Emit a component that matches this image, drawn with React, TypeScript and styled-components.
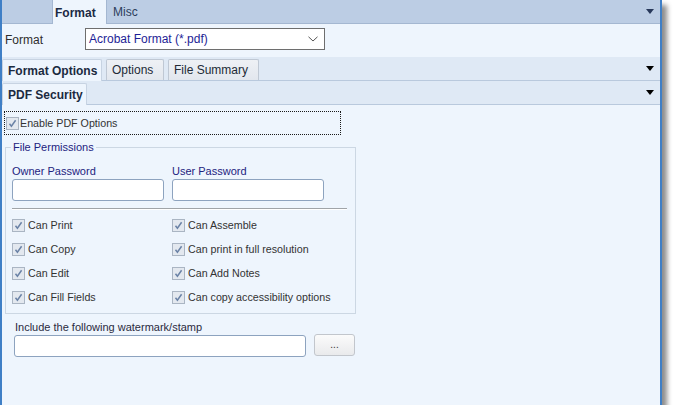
import React from "react";
import styled, { createGlobalStyle } from "styled-components";

const Global = createGlobalStyle`
  html, body { margin: 0; padding: 0; background: #ffffff; }
  body { font-family: "Liberation Sans", Arial, sans-serif; font-size: 11px; }
`;

const Window = styled.div`
  width: 658px;
  height: 405px;
  background: #eef5fd;
  border-left: 2px solid #3f7fc6;
  border-right: 2px solid #3f7fc6;
  box-shadow: 5px 5px 5px rgba(0, 0, 0, 0.45);
  display: flex;
  flex-direction: column;
  overflow: hidden;
`;

const TopStrip = styled.div`
  height: 23px;
  background: #bccde4;
  border-bottom: 1px solid #a4b7d1;
  display: flex;
  align-items: stretch;
  padding-left: 50px;
  padding-right: 6px;
`;

const TopTab = styled.div<{ $active?: boolean }>`
  display: flex;
  align-items: center;
  padding-left: ${(p) => (p.$active ? "2px" : "5px")};
  width: ${(p) => (p.$active ? "55px" : "auto")};
  box-sizing: border-box;
  margin-bottom: ${(p) => (p.$active ? "-1px" : "0")};
  background: ${(p) => (p.$active ? "#eef5fd" : "transparent")};
  border-left: 1px solid ${(p) => (p.$active ? "#a4b7d1" : "transparent")};
  border-right: 1px solid ${(p) => (p.$active ? "#a4b7d1" : "transparent")};
  font-size: 12px;
  font-weight: ${(p) => (p.$active ? "bold" : "normal")};
  color: ${(p) => (p.$active ? "#1b2a44" : "#2c3d5c")};
  padding-top: 1px;
`;

const Spacer = styled.div`
  flex: 1;
`;

const Arrow = styled.div<{ $color: string }>`
  align-self: center;
  width: 0;
  height: 0;
  border-left: 4px solid transparent;
  border-right: 4px solid transparent;
  border-top: 5px solid ${(p) => p.$color};
`;

const FormatRow = styled.div`
  height: 33px;
  display: flex;
  align-items: flex-start;
  padding-top: 4px;
  box-sizing: border-box;
`;

const FormatLabel = styled.div`
  width: 83px;
  padding-left: 3px;
  padding-top: 5px;
  box-sizing: border-box;
  font-size: 12px;
  color: #2e2e2e;
`;

const Combo = styled.div`
  width: 240px;
  height: 22px;
  box-sizing: border-box;
  border: 1px solid #6e6e6e;
  background: #ffffff;
  display: flex;
  align-items: center;
  padding: 0 6px 0 3px;
  font-size: 12px;
  color: #1e1e96;
`;

const SubStrip = styled.div`
  height: 23px;
  background: #dfe9f5;
  border-bottom: 1px solid #b9c9dd;
  display: flex;
  align-items: flex-end;
  padding-right: 6px;
`;

const SubTab = styled.div<{ $active?: boolean; $w: number }>`
  width: ${(p) => p.$w}px;
  height: ${(p) => (p.$active ? "22px" : "21px")};
  box-sizing: border-box;
  margin-right: 4px;
  margin-bottom: ${(p) => (p.$active ? "-1px" : "0")};
  display: flex;
  align-items: center;
  padding-left: 5px;
  border: 1px solid ${(p) => (p.$active ? "#c7d3e2" : "#bfc8d4")};
  border-bottom: none;
  border-radius: 2px 2px 0 0;
  background: ${(p) =>
    p.$active ? "#eef5fd" : "linear-gradient(#eef1f5, #e2e7ee)"};
  font-size: 12px;
  font-weight: ${(p) => (p.$active ? "bold" : "normal")};
  color: ${(p) => (p.$active ? "#1b2a40" : "#222a36")};
`;

const Body = styled.div`
  flex: 1;
  padding: 6px 0 0 2px;
  display: flex;
  flex-direction: column;
  align-items: flex-start;
`;

const FocusRow = styled.div`
  width: 337px;
  height: 24px;
  box-sizing: border-box;
  border: 1px dotted #1a1a1a;
  display: flex;
  align-items: center;
  padding-left: 1px;
  gap: 1px;
`;

const Box = styled.span`
  width: 13px;
  height: 13px;
  box-sizing: border-box;
  border: 1px solid #aab5c3;
  background: #e3e8ef;
  display: inline-flex;
  align-items: center;
  justify-content: center;
  flex-shrink: 0;
`;

const CheckText = styled.span`
  color: #333333;
  font-size: 10.7px;
  white-space: nowrap;
`;

const CheckItem = styled.div`
  display: flex;
  align-items: center;
  gap: 3px;
  height: 24px;
`;

const Group = styled.fieldset`
  margin: 6px 0 0 1px;
  width: 351px;
  box-sizing: border-box;
  border: 1px solid #ccd7e3;
  padding: 12px 6px 4px 6px;
  min-width: 0;
`;

const Legend = styled.legend`
  padding: 0 2px;
  margin-left: -1px;
  font-size: 11px;
  color: #1d2380;
`;

const Grid = styled.div`
  display: grid;
  grid-template-columns: 160px 160px;
`;

const FieldLabel = styled.div`
  font-size: 11px;
  color: #1d2380;
  height: 14px;
`;

const TextInput = styled.div<{ $w: number }>`
  width: ${(p) => p.$w}px;
  height: 22px;
  box-sizing: border-box;
  border: 1px solid #8da3bf;
  border-radius: 3px;
  background: #ffffff;
`;

const Separator = styled.div`
  width: 335px;
  height: 0;
  border-top: 1px solid #a0a4a8;
  border-bottom: 1px solid #ffffff;
  margin: 7px 0 3px 0;
`;

const Watermark = styled.div`
  margin: 7px 0 0 10px;
  display: flex;
  flex-direction: column;
`;

const WmLabel = styled.div`
  font-size: 11px;
  color: #2a2a40;
  height: 14px;
  padding-left: 1px;
`;

const WmRow = styled.div`
  display: flex;
  align-items: flex-start;
  gap: 8px;
`;

const Button = styled.div`
  width: 41px;
  height: 22px;
  margin-top: -1px;
  box-sizing: border-box;
  border: 1px solid #c2c6cc;
  border-radius: 3px;
  background: linear-gradient(#fbfbfb, #e9eaec);
  display: flex;
  align-items: center;
  justify-content: center;
  font-size: 10px;
  color: #333;
  padding-bottom: 2px;
`;

const Check = () => (
  <Box>
    <svg width="9" height="9" viewBox="0 0 9 9">
      <path d="M1.5 4.8 L3.4 7.2 L7.6 1.2" fill="none" stroke="#6a82a6" strokeWidth="1.5" />
    </svg>
  </Box>
);

const CheckBox = ({ label }: { label: string }) => (
  <CheckItem>
    <Check />
    <CheckText>{label}</CheckText>
  </CheckItem>
);

export default function App() {
  return (
    <>
      <Global />
      <Window>
        <TopStrip>
          <TopTab $active>Format</TopTab>
          <TopTab>Misc</TopTab>
          <Spacer />
          <Arrow $color="#27385a" />
        </TopStrip>
        <FormatRow>
          <FormatLabel>Format</FormatLabel>
          <Combo>
            <span>Acrobat Format (*.pdf)</span>
            <Spacer />
            <svg width="10" height="6" viewBox="0 0 10 6">
              <path d="M0.5 0.8 L5 5 L9.5 0.8" fill="none" stroke="#555" strokeWidth="1" />
            </svg>
          </Combo>
        </FormatRow>
        <SubStrip>
          <SubTab $active $w={100}>Format Options</SubTab>
          <SubTab $w={58}>Options</SubTab>
          <SubTab $w={91}>File Summary</SubTab>
          <Spacer />
          <Arrow $color="#000000" />
        </SubStrip>
        <SubStrip>
          <SubTab $active $w={85}>PDF Security</SubTab>
          <Spacer />
          <Arrow $color="#000000" />
        </SubStrip>
        <Body>
          <FocusRow>
            <Check />
            <CheckText>Enable PDF Options</CheckText>
          </FocusRow>
          <Group>
            <Legend>File Permissions</Legend>
            <Grid>
              <div>
                <FieldLabel>Owner Password</FieldLabel>
                <TextInput $w={152} />
              </div>
              <div>
                <FieldLabel>User Password</FieldLabel>
                <TextInput $w={152} />
              </div>
            </Grid>
            <Separator />
            <Grid>
              <CheckBox label="Can Print" />
              <CheckBox label="Can Assemble" />
              <CheckBox label="Can Copy" />
              <CheckBox label="Can print in full resolution" />
              <CheckBox label="Can Edit" />
              <CheckBox label="Can Add Notes" />
              <CheckBox label="Can Fill Fields" />
              <CheckBox label="Can copy accessibility options" />
            </Grid>
          </Group>
          <Watermark>
            <WmLabel>Include the following watermark/stamp</WmLabel>
            <WmRow>
              <TextInput $w={292} />
              <Button>...</Button>
            </WmRow>
          </Watermark>
        </Body>
      </Window>
    </>
  );
}
